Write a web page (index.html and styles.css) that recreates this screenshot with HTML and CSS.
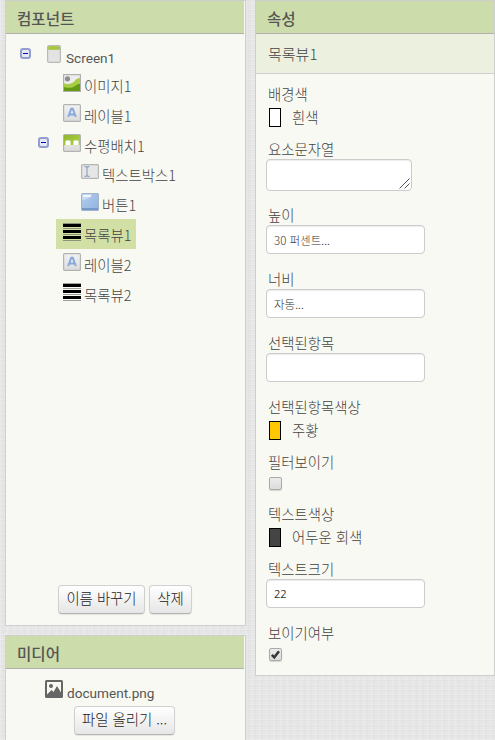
FILE: index.html
```html
<!DOCTYPE html>
<html lang="ko">
<head>
    <meta charset="UTF-8">
    <meta name="viewport" content="width=device-width, initial-scale=1.0">
    <title>컴포넌트</title>
    <link rel="stylesheet" href="styles.css">
</head>
<body>
    <!-- shared icons -->
    <svg class="defs" width="0" height="0">
        <defs>
            <linearGradient id="gray" x1="0" y1="0" x2="0" y2="1">
                <stop offset="0" stop-color="#f2f2f2"/>
                <stop offset="1" stop-color="#dadada"/>
            </linearGradient>
            <linearGradient id="green" x1="0" y1="0" x2="1" y2="1">
                <stop offset="0" stop-color="#8eb52c"/>
                <stop offset="1" stop-color="#b3d548"/>
            </linearGradient>
            <linearGradient id="blue" x1="0" y1="0" x2="1" y2="1">
                <stop offset="0" stop-color="#b4cdee"/>
                <stop offset="1" stop-color="#8fb3df"/>
            </linearGradient>
            <symbol id="minus" viewBox="0 0 11 11">
                <rect x="1" y="1" width="9" height="9" rx="2" fill="#e6e8f3" stroke="#929dd0" stroke-width="2"/>
                <path d="M3 5.500h5" stroke="#0808b8" stroke-width="1"/>
            </symbol>
            <symbol id="label" viewBox="0 0 18 18">
                <rect x=".6" y=".6" width="16.8" height="16.8" rx="1" fill="url(#gray)" stroke="#b3b3b3" stroke-width="1.2"/>
                <path d="M5.2 13 8.2 4.8h1.6l3 8.2M6.5 10.5h5" fill="none" stroke="#86a8dc" stroke-width="1.9"/>
            </symbol>
            <symbol id="list" viewBox="0 0 18 18">
                <path d="M0 .5h18M0 5.500h18M0 11.500h18M0 17.500h18" stroke="#555" stroke-opacity=".55" stroke-width="1"/>
                <path d="M0 2.500h18M0 8.500h18M0 14.500h18" stroke="#000" stroke-width="3"/>
            </symbol>
        </defs>
    </svg>

    <div class="column">
        <div class="panel components">
            <div class="panel-header">컴포넌트</div>
            <div class="tree">
                <div class="node root">
                    <svg class="toggle" width="11" height="11"><use href="#minus"/></svg>
                    <svg class="icon" width="14" height="18" viewBox="0 0 14 18">
                        <rect x=".6" y=".6" width="12.8" height="16.8" rx="1.5" fill="#e3e3e3" stroke="#b9b9b9" stroke-width="1.2"/>
                        <path d="M1.2 1.2h11.6v3.6H1.2z" fill="#a3c73a"/>
                    </svg>
                    <span class="latin">Screen1</span>
                </div>
                <div class="node level1">
                    <svg class="icon" width="18" height="18" viewBox="0 0 18 18">
                        <rect x=".6" y=".6" width="16.8" height="16.8" fill="#ededed" stroke="#b0b0b0" stroke-width="1.2"/>
                        <circle cx="4.5" cy="4.8" r="2.6" fill="#8e8e8e"/>
                        <path d="M1 9.500c5 1 9 0 11-3 1-1.500 3-2.500 5-2.500V17H1z" fill="#a9cd45"/>
                        <path d="M1 13c5 1.500 8 1 11-1 2-1.500 3-2 5-2v7H1z" fill="#659a16"/>
                    </svg>
                    <span>이미지1</span>
                </div>
                <div class="node level1">
                    <svg class="icon" width="18" height="18"><use href="#label"/></svg>
                    <span>레이블1</span>
                </div>
                <div class="node level1">
                    <svg class="toggle" width="11" height="11"><use href="#minus"/></svg>
                    <svg class="icon" width="18" height="18" viewBox="0 0 18 18">
                        <rect x=".6" y=".6" width="16.8" height="16.8" rx="1" fill="url(#gray)" stroke="#b3b3b3" stroke-width="1.2"/>
                        <path d="M1 1h16v10H1z" fill="url(#green)"/>
                        <rect x="2.500" y="6.500" width="5" height="5" rx="1.200" fill="#fff" stroke="#d5dfbd" stroke-width=".8"/>
                        <rect x="10.500" y="6.500" width="5" height="5" rx="1.200" fill="#fff" stroke="#d5dfbd" stroke-width=".8"/>
                    </svg>
                    <span>수평배치1</span>
                </div>
                <div class="node level2 short">
                    <svg class="icon" width="18" height="15" viewBox="0 0 18 15">
                        <rect x=".6" y=".6" width="16.8" height="13.8" rx="1" fill="#e6e6e6" stroke="#b5b5b5" stroke-width="1.2"/>
                        <path d="M3.500 2.700h1.500l1 1 1-1h1.500M6 3.500v8M3.500 12.300h1.500l1-1 1 1h1.500" fill="none" stroke="#8da4c5" stroke-width="1.200"/>
                    </svg>
                    <span>텍스트박스1</span>
                </div>
                <div class="node level2">
                    <svg class="icon" width="18" height="18" viewBox="0 0 18 18">
                        <rect x=".6" y=".6" width="16.8" height="16.8" rx="1" fill="url(#blue)" stroke="#a5b3c8" stroke-width="1.2"/>
                        <path d="M1.200 1.200h9.500c-1 3-4 5-9.500 6z" fill="#c8dbf3"/>
                        <path d="M2 3h8" stroke="#eef5fd" stroke-width="2"/>
                        <path d="M1 16h16" stroke="#7599cb" stroke-width="2"/>
                    </svg>
                    <span>버튼1</span>
                </div>
                <div class="node level1 selected">
                    <svg class="icon" width="18" height="18"><use href="#list"/></svg>
                    <span>목록뷰1</span>
                </div>
                <div class="node level1">
                    <svg class="icon" width="18" height="18"><use href="#label"/></svg>
                    <span>레이블2</span>
                </div>
                <div class="node level1">
                    <svg class="icon" width="18" height="18"><use href="#list"/></svg>
                    <span>목록뷰2</span>
                </div>
            </div>
            <div class="actions">
                <button class="btn rename">이름 바꾸기</button>
                <button class="btn delete">삭제</button>
            </div>
        </div>

        <div class="panel media">
            <div class="panel-header">미디어</div>
            <div class="file">
                <svg class="icon" width="18" height="18" viewBox="0 0 18 18">
                    <rect width="18" height="18" rx="1.5" fill="#666"/>
                    <path d="M2 2h14v10.500l-4-6.500-3.500 6-2-2L2 14.500z" fill="#f8f9f2"/>
                    <circle cx="6" cy="6" r="2" fill="#666"/>
                </svg>
                <span class="latin">document.png</span>
            </div>
            <button class="btn upload">파일 올리기 ...</button>
        </div>
    </div>

    <div class="panel properties">
        <div class="panel-header">속성</div>
        <div class="component-name">목록뷰1</div>
        <div class="props">
            <div class="prop color">
                <label>배경색</label>
                <div class="color-value"><i class="swatch white"></i><span>흰색</span></div>
            </div>
            <div class="prop area">
                <label>요소문자열</label>
                <div class="textarea-wrap">
                    <textarea></textarea>
                    <svg class="grip" width="11" height="11" viewBox="0 0 11 11"><path d="M.5 10.500l10-10M5.500 10.500l5-5" stroke="#555" stroke-width="1"/></svg>
                </div>
            </div>
            <div class="prop">
                <label>높이</label>
                <input type="text" value="30 퍼센트...">
            </div>
            <div class="prop">
                <label>너비</label>
                <input type="text" value="자동...">
            </div>
            <div class="prop">
                <label>선택된항목</label>
                <input type="text">
            </div>
            <div class="prop color">
                <label>선택된항목색상</label>
                <div class="color-value"><i class="swatch orange"></i><span>주황</span></div>
            </div>
            <div class="prop check">
                <label>필터보이기</label>
                <span class="checkbox"></span>
            </div>
            <div class="prop color">
                <label>텍스트색상</label>
                <div class="color-value"><i class="swatch dark"></i><span>어두운 회색</span></div>
            </div>
            <div class="prop">
                <label>텍스트크기</label>
                <input class="number" type="text" value="22">
            </div>
            <div class="prop check">
                <label>보이기여부</label>
                <span class="checkbox">
                    <svg width="11" height="11" viewBox="0 0 11 11"><path d="M1.800 5.800 4.300 8.300 9 2.300" fill="none" stroke="#383838" stroke-width="2.500"/></svg>
                </span>
            </div>
        </div>
    </div>
</body>
</html>
```
FILE: styles.css
```css
* {
    box-sizing: border-box;
}

body {
    margin: 0;
    height: 740px;
    overflow: hidden;
    display: flex;
    align-items: flex-start;
    gap: 9px;
    padding-left: 5px;
    font-family: "Noto Sans CJK KR", sans-serif;
    font-size: 14.4px;
    font-weight: 300;
    color: #444;
    background-color: #e6e6e6;
    background-image:
        repeating-linear-gradient(90deg, rgba(255, 255, 255, 0.15) 0 1px, transparent 1px 3px, rgba(0, 0, 0, 0.015) 3px 4px, transparent 4px 7px),
        repeating-linear-gradient(0deg, rgba(255, 255, 255, 0.15) 0 1px, transparent 1px 4px, rgba(0, 0, 0, 0.015) 4px 5px);
}

.defs {
    position: absolute;
}

.latin {
    font-family: Roboto, sans-serif;
    font-size: 13.6px;
    font-weight: 400;
    color: #555;
}

.column {
    display: flex;
    flex-direction: column;
    gap: 9px;
    width: 241px;
    flex: none;
}

.panel {
    background-color: #f8f9f2;
    border: 1px solid #cfcfcf;
}

.panel-header {
    height: 33px;
    padding-left: 11px;
    line-height: 35px;
    font-size: 15.6px;
    font-weight: 500;
    color: #555;
    background-color: #ccdcaa;
    border-bottom: 1px solid #b0b0b0;
}

.column .panel-header {
    margin-right: 1px;
}

/* Component tree */
.components {
    height: 626px;
    display: flex;
    flex-direction: column;
}

.tree {
    flex: 1;
    padding-top: 7px;
}

.node {
    display: flex;
    align-items: flex-start;
    gap: 3px;
    width: fit-content;
    height: 30px;
    padding-top: 4px;
    line-height: 24px;
    white-space: nowrap;
}

.node .icon {
    flex: none;
}

.root {
    height: 29px;
    margin-left: 14px;
    line-height: 26px;
}

.root .icon {
    margin: 0 2px 0 13px;
}

.root .toggle {
    margin-top: 3px;
}

.level1 {
    margin-left: 50px;
    padding-left: 7px;
    padding-right: 5px;
}

.level1 .toggle {
    margin: 3px 11px 0 -25px;
}

.level2 {
    margin-left: 75px;
}

.short {
    height: 29px;
    line-height: 22px;
}

.selected {
    background-color: #d2e0a6;
}

.actions {
    display: flex;
    gap: 4px;
    padding: 0 0 11px 52px;
}

.btn {
    height: 29px;
    padding: 0 0 3px;
    font: inherit;
    line-height: 24px;
    color: #222;
    background: linear-gradient(#fff, #e6e6e6);
    border: 1px solid #d0d0d0;
    border-bottom-color: #b3b3b3;
    border-radius: 4px;
    box-shadow: 0 1px 1px rgba(0, 0, 0, 0.08);
}

.rename {
    width: 87px;
}

.delete {
    width: 43px;
}

/* Media */
.media {
    height: 120px;
}

.file {
    display: flex;
    gap: 4px;
    height: 26px;
    margin: 11px 0 0 39px;
    line-height: 26px;
}

.upload {
    width: 101px;
    margin-left: 68px;
}

/* Properties */
.properties {
    width: 240px;
    height: 676px;
    flex: none;
}

.component-name {
    height: 40px;
    padding-left: 12px;
    line-height: 40px;
    font-size: 15px;
    background-color: #ecf1df;
    border-bottom: 1px solid #cfcfcf;
}

.props {
    padding: 10px 0 0 10px;
}

.prop {
    height: 64px;
}

.prop label {
    display: block;
    height: 20px;
    padding-left: 2px;
    line-height: 20px;
}

.prop.color {
    height: 55px;
}

.prop.area {
    height: 66px;
}

.prop.check {
    height: 52px;
}

input, textarea {
    display: block;
    width: 159px;
    height: 29px;
    margin: 0;
    padding: 0 7px;
    font-family: "Noto Sans CJK KR", sans-serif;
    font-size: 11.5px;
    font-weight: 300;
    color: #333;
    background-color: #fff;
    border: 1px solid #ccc;
    border-radius: 4px;
    box-shadow: inset 0 1px 1px rgba(0, 0, 0, 0.075);
}

textarea {
    width: 146px;
    height: 32px;
    resize: none;
}

.textarea-wrap {
    position: relative;
    width: 146px;
}

.grip {
    position: absolute;
    right: 2px;
    bottom: 2px;
}

.number {
    font-family: "Open Sans", sans-serif;
    font-size: 11px;
    font-weight: 400;
}

.color-value {
    display: flex;
    gap: 11px;
    margin-left: 3px;
    padding-top: 4px;
    line-height: 17px;
}

.swatch {
    width: 12px;
    height: 19px;
    border: 1px solid #000;
}

.white {
    background-color: #fff;
}

.orange {
    background-color: #ffc800;
}

.dark {
    background-color: #444;
}

.checkbox {
    display: block;
    width: 13px;
    height: 13px;
    margin: 5px 0 0 3px;
    background: linear-gradient(#ececec, #dcdcdc);
    border: 1px solid #aaa;
    border-radius: 2px;
    box-shadow: 0 1px 1px rgba(0, 0, 0, 0.15);
}

.checkbox svg {
    display: block;
}
```
